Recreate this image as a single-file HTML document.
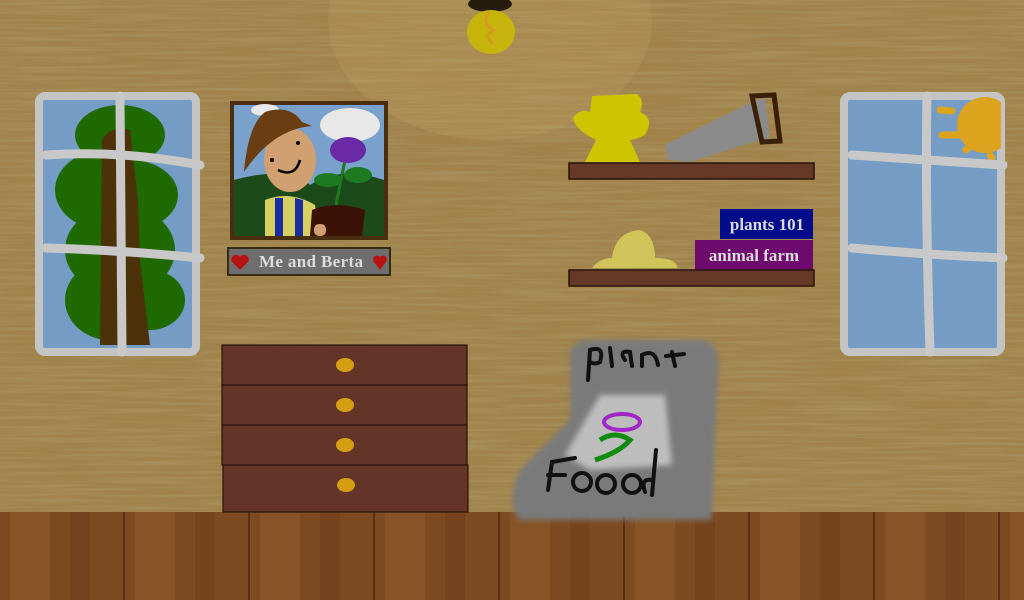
<!DOCTYPE html>
<html><head><meta charset="utf-8"><style>
html,body{margin:0;padding:0;width:1024px;height:600px;overflow:hidden;background:#9c7d44}
svg{display:block}
text{font-family:"Liberation Serif",serif}
</style></head><body>
<svg width="1024" height="600" viewBox="0 0 1024 600" xmlns="http://www.w3.org/2000/svg">
<defs>
<filter id="noise" x="0" y="0" width="100%" height="100%">
<feTurbulence type="fractalNoise" baseFrequency="0.01 0.35" numOctaves="2" seed="3"/>
<feColorMatrix type="matrix" values="0 0 0 0 0.42  0 0 0 0 0.33  0 0 0 0 0.15  0 0 0 1.2 -0.45"/>
</filter>
<pattern id="floor" width="125" height="88" patternUnits="userSpaceOnUse">
<rect width="125" height="88" fill="#7e4a22"/>
<rect x="10" y="0" width="40" height="88" fill="#8e5829" opacity=".6"/>
<rect x="70" y="0" width="20" height="88" fill="#6a3a1a" opacity=".4"/>
<rect x="123" y="0" width="2" height="88" fill="#5a3014"/>
</pattern>
<filter id="blur"><feGaussianBlur stdDeviation="3"/></filter>
<clipPath id="rw"><rect x="844" y="96" width="157" height="256" rx="6"/></clipPath>
</defs>
<rect width="1024" height="512" fill="#a0824a"/>
<rect width="1024" height="512" filter="url(#noise)"/>
<ellipse cx="490" cy="20" rx="162" ry="120" fill="#c2a464" opacity=".25"/>
<rect y="512" width="1024" height="88" fill="url(#floor)"/>
<!-- lamp -->
<ellipse cx="490" cy="4" rx="22" ry="8" fill="#251c0c"/>
<ellipse cx="491" cy="32" rx="24" ry="22" fill="#c6b30c"/>
<path d="M489 12 q-8 10 4 18 q-10 6 0 14" stroke="#d49a20" stroke-width="3" fill="none"/>
<!-- left window -->
<rect x="39" y="96" width="157" height="256" rx="6" fill="#759cc4" stroke="#c4c4c4" stroke-width="8"/>
<g fill="#1e6a00">
<ellipse cx="120" cy="135" rx="45" ry="30"/><ellipse cx="105" cy="190" rx="50" ry="40"/>
<ellipse cx="130" cy="195" rx="48" ry="35"/>
<ellipse cx="120" cy="250" rx="55" ry="45"/><ellipse cx="110" cy="300" rx="45" ry="40"/>
<ellipse cx="150" cy="300" rx="35" ry="30"/>
</g>
<path d="M100 345 L102 140 Q110 125 130 130 L138 200 L140 260 L150 345 Z" fill="#4b3208"/>
<g stroke="#c8c8c8" stroke-width="9" stroke-linecap="round" fill="none">
<path d="M120 96 L122 352"/><path d="M46 155 Q120 150 200 165"/><path d="M46 248 Q120 250 200 258"/>
</g>
<!-- right window -->
<rect x="844" y="96" width="157" height="256" rx="6" fill="#759cc4" stroke="#c4c4c4" stroke-width="8"/>
<g clip-path="url(#rw)">
<circle cx="985" cy="125" r="28" fill="#dca41e"/>
</g>
<g stroke="#dca41e" stroke-width="7" stroke-linecap="round"><path d="M940 110 L952 111"/><path d="M942 135 L960 135"/><path d="M966 150 L970 146"/><path d="M990 155 L992 158"/></g>
<g stroke="#c8c8c8" stroke-width="9" stroke-linecap="round" fill="none">
<path d="M927 96 Q925 200 930 352"/><path d="M852 155 Q930 160 1003 165"/><path d="M852 248 Q930 255 1003 258"/>
</g>
<!-- picture -->
<rect x="230" y="101" width="158" height="139" fill="#4a2e10"/>
<rect x="234" y="105" width="150" height="131" fill="#7aa0cc"/>
<ellipse cx="350" cy="125" rx="30" ry="17" fill="#e8e8e8"/><ellipse cx="265" cy="110" rx="14" ry="6" fill="#e8e8e8"/>
<path d="M234 236 L234 180 Q290 165 310 185 Q340 165 384 180 L384 236 Z" fill="#1c4a1a"/>
<ellipse cx="290" cy="160" rx="26" ry="32" fill="#d0a070"/>
<path d="M244 172 Q248 125 265 112 Q290 104 302 122 L312 126 Q285 128 262 150 Q252 160 244 172 Z" fill="#6a3e12"/>
<circle cx="272" cy="160" r="2" fill="#000"/><circle cx="298" cy="143" r="2" fill="#000"/>
<path d="M278 170 Q295 178 300 160" stroke="#000" stroke-width="2.5" fill="none"/>
<path d="M265 236 L265 200 Q290 190 315 205 L320 236 Z" fill="#d6d060"/>
<path d="M275 236 L275 198 L283 198 L283 236 Z M295 236 L295 198 L303 200 L303 236Z" fill="#1a2ea0"/>
<path d="M310 236 L312 210 Q335 200 365 210 L362 236 Z" fill="#3a1206"/>
<path d="M336 205 L345 160" stroke="#1e7a20" stroke-width="3"/>
<ellipse cx="328" cy="180" rx="14" ry="7" fill="#1e7a20"/><ellipse cx="358" cy="175" rx="14" ry="8" fill="#1e7a20"/>
<ellipse cx="348" cy="150" rx="18" ry="13" fill="#6a2aa6"/>
<rect x="314" y="224" width="12" height="12" rx="5" fill="#d0a070"/>
<rect x="228" y="248" width="162" height="27" fill="#6e6e6e" stroke="#3a2a12" stroke-width="2"/>
<text x="311" y="267" font-size="17" fill="#dcdcdc" text-anchor="middle" font-weight="bold" textLength="104">Me and Berta</text>
<path d="M240 270 l-8 -8 a4 4 0 0 1 8 -5 a4 4 0 0 1 8 5z" fill="#b81212"/>
<path d="M380 270 l-6 -8 a3.5 3.5 0 0 1 6 -5 a3.5 3.5 0 0 1 6 5z" fill="#b81212"/>
<!-- shelves -->
<path d="M592 96 L637 94 Q645 100 640 112 Q655 118 645 135 Q635 140 630 140 L640 162 L585 162 L596 140 Q575 130 573 118 Q580 108 590 112 Z" fill="#cec400"/>
<path d="M665 145 L752 102 L765 98 L770 138 L760 140 L690 162 L668 160 Z" fill="#8a8a8a"/>
<path d="M752 96 L774 95 L780 141 L762 142 Z" fill="none" stroke="#3a2008" stroke-width="5"/>
<rect x="569" y="163" width="245" height="16" fill="#653828" stroke="#2a140a" stroke-width="1.5"/>
<path d="M592 268 Q600 258 612 258 Q615 232 640 230 Q655 235 655 258 Q676 258 678 268 Z" fill="#cfc35a"/>
<rect x="720" y="209" width="93" height="30" fill="#000c8a"/>
<text x="767" y="230" font-size="17" fill="#dcdcdc" text-anchor="middle" font-weight="bold">plants 101</text>
<rect x="695" y="240" width="118" height="30" fill="#6e0a6e"/>
<text x="754" y="261" font-size="17" fill="#dcdcdc" text-anchor="middle" font-weight="bold">animal farm</text>
<rect x="569" y="270" width="245" height="16" fill="#653828" stroke="#2a140a" stroke-width="1.5"/>
<!-- dresser -->
<g fill="#633427" stroke="#2a140a" stroke-width="1.2">
<rect x="222" y="345" width="245" height="40"/><rect x="222" y="385" width="245" height="40"/>
<rect x="222" y="425" width="245" height="40"/><rect x="223" y="465" width="245" height="47"/>
</g>
<g fill="#d49e10"><ellipse cx="345" cy="365" rx="9" ry="7"/><ellipse cx="345" cy="405" rx="9" ry="7"/><ellipse cx="345" cy="445" rx="9" ry="7"/><ellipse cx="346" cy="485" rx="9" ry="7"/></g>
<!-- plant food -->
<path d="M580 340 L705 340 Q720 345 718 370 L712 520 L520 520 Q505 505 520 470 L570 420 L570 350 Z" fill="#7a7a7a" filter="url(#blur)"/>
<path d="M600 395 L665 395 L672 465 L590 470 L565 455 Z" fill="#bdbdbd" filter="url(#blur)"/>
<ellipse cx="622" cy="422" rx="18" ry="8" fill="none" stroke="#a026c8" stroke-width="4"/>
<path d="M600 440 Q615 430 630 440 Q620 452 595 460" fill="none" stroke="#108a10" stroke-width="5"/>
<g stroke="#111" stroke-width="4" fill="none" stroke-linecap="round">
<path d="M588 380 L590 350 Q605 345 600 362 Q595 365 590 362"/><path d="M610 348 L612 366"/>
<path d="M625 360 Q618 350 630 352 L632 366"/><path d="M642 366 L642 355 Q655 348 658 365"/>
<path d="M672 352 L675 366 M666 356 L684 354"/>
<path d="M548 490 L552 462 L575 458 M548 475 L565 475"/>
<circle cx="582" cy="482" r="9"/><circle cx="606" cy="484" r="9"/><circle cx="632" cy="484" r="9"/>
<path d="M652 495 L656 450"/><path d="M652 480 Q640 478 645 492"/>
</g>
</svg>
</body></html>
